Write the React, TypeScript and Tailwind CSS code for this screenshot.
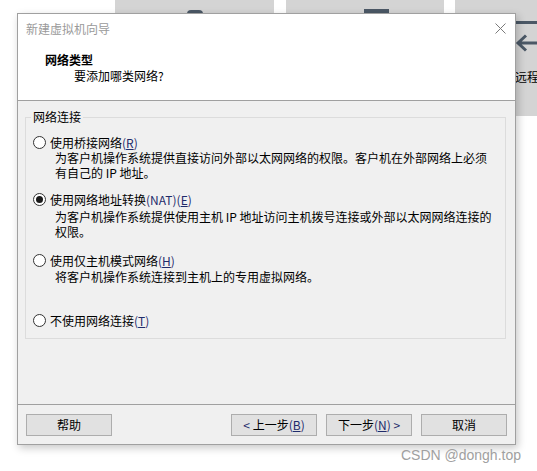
import React from "react";

function K({ children }: { children: React.ReactNode }) {
  return <span className="text-[#1f2b6b]">{children}</span>;
}

function Radio({ checked }: { checked?: boolean }) {
  return (
    <span className="w-[13px] h-[13px] rounded-full border border-[#333333] bg-white flex items-center justify-center shrink-0">
      {checked && <span className="w-[7px] h-[7px] rounded-full bg-[#1a1a1a]" />}
    </span>
  );
}

function Option({
  label,
  checked,
  className,
}: {
  label: React.ReactNode;
  checked?: boolean;
  className: string;
}) {
  return (
    <div className={`flex items-center h-[15px] ${className}`}>
      <Radio checked={checked} />
      <span className="ml-[4px] leading-[15px] whitespace-nowrap">{label}</span>
    </div>
  );
}

function Btn({ children }: { children: React.ReactNode }) {
  return (
    <div className="h-[22px] w-[86px] border border-[#adadad] bg-[#e1e1e1] text-[12px] text-black flex items-center justify-center whitespace-nowrap">
      {children}
    </div>
  );
}

export default function App() {
  return (
    <div className="relative w-[537px] h-[471px] overflow-hidden bg-white font-['Noto_Sans_CJK_SC',sans-serif] text-black">
      {/* background application tiles */}
      <div className="absolute left-[115px] top-0 w-[159px] h-[116px] bg-[#d4d4d4]">
        <div className="absolute left-[72px] top-[10px] w-[16px] h-[8px] rounded-full bg-[#4b5866]" />
      </div>
      <div className="absolute left-[286px] top-0 w-[158px] h-[116px] bg-[#d4d4d4]">
        <div className="absolute left-[78px] top-[9px] w-[25px] h-[10px] bg-[#4b5866]" />
      </div>
      <div className="absolute left-[455px] top-0 w-[82px] h-[116px] bg-[#d4d4d4]">
        <div className="absolute left-[50px] top-[21px] w-[40px] h-[3px] bg-[#4b5866]" />
        <svg className="absolute left-[60px] top-[33px]" width="26" height="20" viewBox="0 0 26 20">
          <path d="M3 10 H26 M11 2.5 L3 10 L11 17.5" stroke="#4b5866" strokeWidth="3" fill="none" />
        </svg>
        <div className="absolute left-[60px] top-[69px] text-[12px] leading-[16px] whitespace-nowrap">远程</div>
      </div>

      {/* dialog window */}
      <div className="absolute left-[17px] top-[13px] w-[499px] h-[432px] border border-[#a0a0a0] bg-[#f0f0f0] flex flex-col shadow-[2px_3px_8px_rgba(0,0,0,0.22)]">
        <div className="bg-white border-b border-[#a0a0a0]">
          <div className="h-[29px] flex items-center justify-between pl-[8px] pr-[9px]">
            <span className="text-[12px] leading-[16px] text-[#9a9a9a]">新建虚拟机向导</span>
            <svg width="11" height="11" viewBox="0 0 11 11">
              <path d="M0.5 0.5 L10.5 10.5 M10.5 0.5 L0.5 10.5" stroke="#7a7a7a" strokeWidth="1" fill="none" />
            </svg>
          </div>
          <div className="pt-[9px] pb-[16px] text-[12px] leading-[16px]">
            <div className="pl-[27px] font-bold">网络类型</div>
            <div className="pl-[56px]">要添加哪类网络?</div>
          </div>
        </div>

        <div className="flex-1 pt-[8px] pl-[7px] pr-[9px] text-[12px]">
          <fieldset className="border border-[#dcdcdc] pl-[7px] pr-[4px] pb-[10px]">
            <legend className="-ml-[2px] px-[2px] leading-[16px]">网络连接</legend>
            <Option
              className="mt-[10px]"
              label={
                <>
                  使用桥接网络<K>(<u>R</u>)</K>
                </>
              }
            />
            <div className="pl-[22px] leading-[15px] whitespace-nowrap">
              为客户机操作系统提供直接访问外部以太网网络的权限。客户机在外部网络上必须
              <br />
              有自己的 IP 地址。
            </div>
            <Option
              className="mt-[12px]"
              checked
              label={
                <>
                  使用网络地址转换<K>(NAT)(<u>E</u>)</K>
                </>
              }
            />
            <div className="mt-[2px] pl-[22px] leading-[15px] whitespace-nowrap">
              为客户机操作系统提供使用主机 IP 地址访问主机拨号连接或外部以太网网络连接的
              <br />
              权限。
            </div>
            <Option
              className="mt-[14px]"
              label={
                <>
                  使用仅主机模式网络<K>(<u>H</u>)</K>
                </>
              }
            />
            <div className="mt-[1px] pl-[22px] leading-[15px] whitespace-nowrap">
              将客户机操作系统连接到主机上的专用虚拟网络。
            </div>
            <Option
              className="mt-[29px]"
              label={
                <>
                  不使用网络连接<K>(<u>T</u>)</K>
                </>
              }
            />
          </fieldset>
        </div>

        <div className="border-t border-[#a0a0a0] pt-[9px] pb-[8px] px-[8px] flex">
          <Btn>帮助</Btn>
          <div className="ml-auto flex gap-[9px]">
            <Btn>
              <K>&lt;</K>&nbsp;上一步<K>(<u>B</u>)</K>
            </Btn>
            <Btn>
              下一步<K>(<u>N</u>)</K>&nbsp;<K>&gt;</K>
            </Btn>
            <Btn>取消</Btn>
          </div>
        </div>
      </div>

      {/* watermark */}
      <div className="absolute right-[16px] top-[446px] font-['Liberation_Sans',sans-serif] text-[14px] leading-[18px] text-[#a0a0a0] whitespace-nowrap">
        CSDN @dongh.top
      </div>
    </div>
  );
}
